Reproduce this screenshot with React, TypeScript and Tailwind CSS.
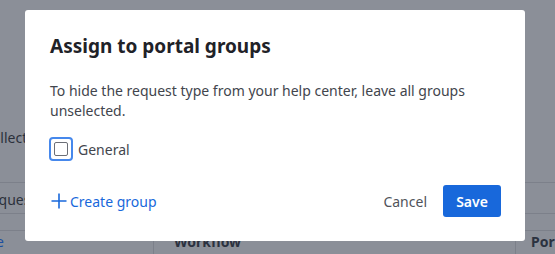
const font = { fontFamily: '"Noto Sans", "Liberation Sans", sans-serif' };

function Backdrop() {
  return (
    <div className="flex h-[254px] w-[555px] flex-col text-[14px] text-[#2b313b]" style={font}>
      <div className="h-[128px]" />
      <p className="-ml-[17px] whitespace-nowrap leading-5">Collection</p>
      <div className="h-[34px]" />
      <div className="h-[31px] border-t border-[#7c808a] pt-[7px]">
        <p className="-ml-[18px] whitespace-nowrap leading-5">Request type</p>
      </div>
      <div className="h-[17px] border-t border-[#7c808a]" />
      <div className="flex h-[24px] border-t border-[#7c808a]">
        <div className="w-[154px] border-r border-[#7c808a]">
          <span className="-ml-[4px] text-[#1c4fa0]">e</span>
        </div>
        <div className="flex-1 pl-[20px] font-bold text-[#2b3240]">Workflow</div>
        <div className="w-[40px] border-l border-[#7c808a] pl-[15px] font-bold text-[#2b3240]">Por</div>
      </div>
    </div>
  );
}

export default function App() {
  return (
    <div className="relative h-[254px] w-[555px] overflow-hidden bg-[#8b8f98]">
      <Backdrop />
      <div
        className="absolute left-[25px] top-[10px] flex h-[231px] w-[500px] flex-col rounded-[3px] bg-white pl-[25px] pr-[24px] pt-[24px] text-[#292a2e]"
        style={font}
      >
        <h2 className="text-[19px] font-bold leading-6 text-[#1f2228]">Assign to portal groups</h2>
        <p className="mt-[23px] text-[14px] leading-5 text-[#42454d]">
          To hide the request type from your help center, leave all groups unselected.
        </p>
        <label className="mt-[16px] flex h-[24px] items-center gap-[5px]">
          <span className="-ml-px flex h-[24px] w-[24px] items-center justify-center rounded-[4px] border-2 border-[#4688ec]">
            <span className="h-[14px] w-[14px] rounded-[2px] border-[1.5px] border-[#6b6e76] bg-white" />
          </span>
          <span className="text-[14px] text-[#42454d]">General</span>
        </label>
        <div className="mt-[24px] flex h-[32px] items-center">
          <button type="button" className="flex items-center gap-[3px] text-[14px] text-[#1868db]">
            <svg width="16" height="16" viewBox="0 0 16 16" className="ml-px" fill="none" stroke="currentColor" strokeWidth="1.6">
              <path d="M8 0.5v15M0.5 8h15" />
            </svg>
            Create group
          </button>
          <div className="flex-1" />
          <button type="button" className="px-[10px] text-[14px] text-[#50535a]">Cancel</button>
          <button
            type="button"
            className="ml-[6px] h-[32px] w-[58px] rounded-[3px] bg-[#1868db] text-[14px] font-semibold text-white"
          >
            Save
          </button>
        </div>
      </div>
    </div>
  );
}
